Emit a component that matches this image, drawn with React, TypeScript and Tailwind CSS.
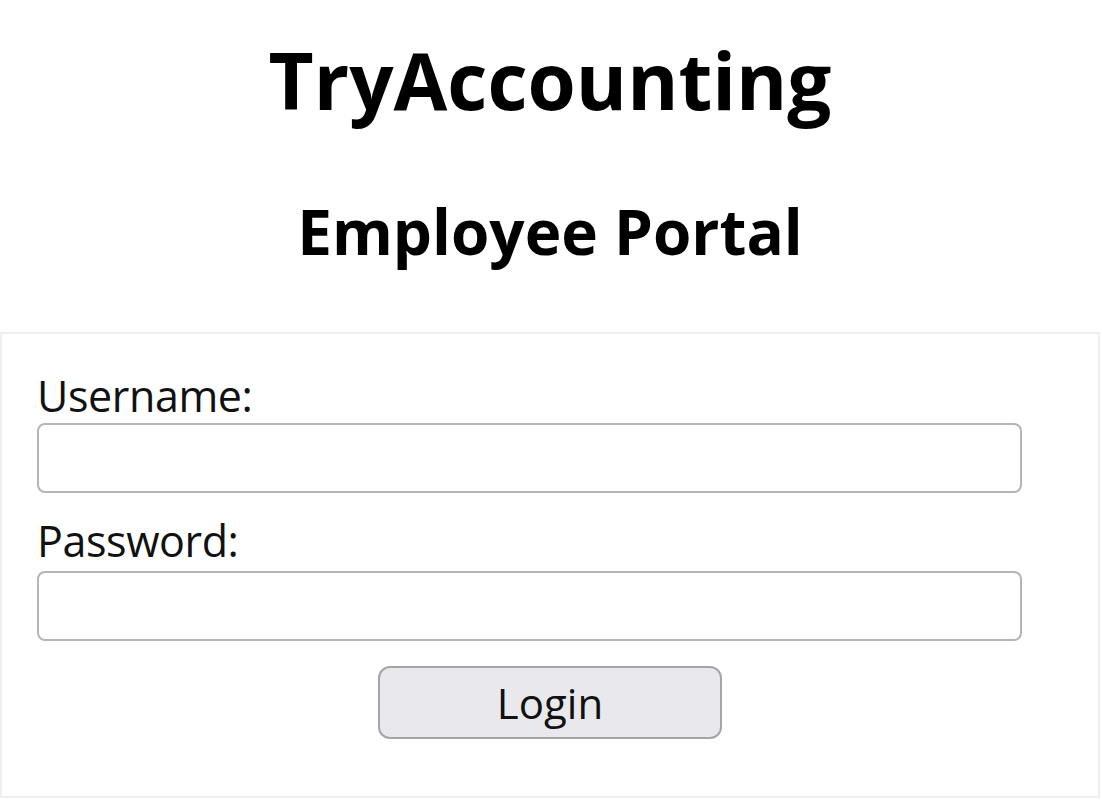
export default function App() {
  return (
    <div
      className="w-[1100px] bg-white text-black pt-[40px]"
      style={{ fontFamily: '"Open Sans", "Noto Sans", sans-serif' }}
    >
      {/* Title block */}
      <h1 className="text-center font-bold text-[78px] leading-[80px] h-[80px]">TryAccounting</h1>
      <h2 className="mt-[80px] text-center font-bold text-[62px] leading-[63px] h-[63px]">Employee Portal</h2>

      {/* Login form */}
      <form
        className="mt-[69px] w-[1100px] border-2 border-[#efefef] pl-[35px] pt-[35px] pb-[57px]"
        onSubmit={(e) => e.preventDefault()}
      >
        <label htmlFor="username" className="block h-[54px] text-[43px] leading-[54px] tracking-[-0.4px] text-[#111]">
          Username:
        </label>
        <input
          id="username"
          type="text"
          className="block w-[985px] h-[70px] border-2 border-[#b4b4ba] rounded-[8px] bg-white px-3 text-[40px] outline-none"
        />

        <label htmlFor="password" className="mt-[21px] block h-[54px] text-[43px] leading-[54px] tracking-[-0.4px] text-[#111]">
          Password:
        </label>
        <input
          id="password"
          type="password"
          className="mt-[3px] block w-[985px] h-[70px] border-2 border-[#b4b4ba] rounded-[8px] bg-white px-3 text-[40px] outline-none"
        />

        <div className="mt-[25px] flex justify-center pr-[35px]">
          <button
            type="submit"
            className="w-[344px] h-[73px] border-2 border-[#a4a4aa] rounded-[12px] bg-[#e9e9ed] text-[42px] leading-none text-[#111]"
          >
            Login
          </button>
        </div>
      </form>
    </div>
  );
}
